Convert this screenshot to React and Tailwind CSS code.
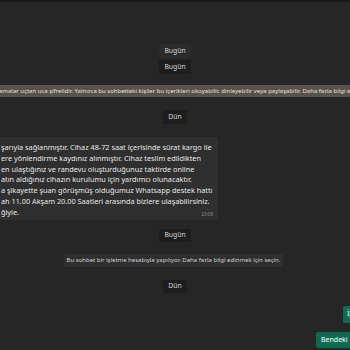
const font = { fontFamily: '"Noto Sans", "Open Sans", sans-serif' };

const lines = [
  'şarıyla sağlanmıştır. Cihaz 48-72 saat içerisinde sürat kargo ile',
  'ere yönlendirme kaydınız alınmıştır. Cihaz teslim edildikten',
  'en ulaştığınız ve randevu oluşturduğunuz taktirde online',
  'atın aldığınız cihazın kurulumu için yardımcı olunacaktır.',
  'a şikayette şuan görüşmüş olduğumuz Whatsapp destek hattı',
  'ah 11.00 Akşam 20.00 Saatleri arasında bizlere ulaşabilirsiniz.',
  'ğiyle.',
];

const Chip = ({ children, className = '' }) => (
  <div className="flex justify-center">
    <div className={`px-[5px] rounded-[2px] text-[6.8px] text-[#d4d4d4] flex items-center ${className}`}>
      {children}
    </div>
  </div>
);

export default function App() {
  return (
    <div className="w-[350px] h-[350px] overflow-hidden bg-[#262626] flex flex-col" style={font}>
      <div className="h-[2px] bg-[#1c1c1c]" />

      <Chip className="mt-[42px] h-[14px] bg-[#2b2b2b]">Bugün</Chip>
      <Chip className="mt-[2px] h-[14px] bg-[#1d1d1d]">Bugün</Chip>

      <div className="mt-[11px] h-[12px] bg-[#57534b] flex items-center overflow-hidden">
        <span className="whitespace-nowrap text-[6px] text-[#e2e0da] -ml-[1px]">
          amalar uçtan uca şifrelidir. Yalnızca bu sohbetteki kişiler bu içerikleri okuyabilir, dinleyebilir veya paylaşabilir. Daha fazla bilgi edinmek için seçin.
        </span>
      </div>

      <Chip className="mt-[13px] h-[14px] bg-[#1d1d1d]">Dün</Chip>

      <div className="mt-[13px] w-[218px] h-[83px] bg-[#2f2f2f] rounded-r-[3px] relative pt-[5px] overflow-hidden">
        {lines.map((l, i) => (
          <div key={i} className="whitespace-nowrap text-[7.3px] leading-[10.8px] text-[#e6e6e6] pl-[1px]">
            {l}
          </div>
        ))}
        <span className="absolute right-[5px] bottom-[2px] text-[4.5px] text-[#8c8c8c]">23:08</span>
      </div>

      <Chip className="mt-[9px] h-[13px] bg-[#1d1d1d]">Bugün</Chip>

      <div className="mt-[12px] ml-[64px] w-[219px] h-[13px] bg-[#2f2f2f] rounded-[2px] flex items-center justify-center">
        <span className="whitespace-nowrap text-[6px] text-[#cfcfcf]">
          Bu sohbet bir işletme hesabıyla yapılıyor. Daha fazla bilgi edinmek için seçin.
        </span>
      </div>

      <Chip className="mt-[13px] h-[13px] bg-[#1d1d1d]">Dün</Chip>

      <div className="mt-[13px] flex justify-end">
        <div className="h-[17px] w-[40px] -mr-[33px] bg-[#0e6b51] rounded-[2px] text-[7px] text-white flex items-center pl-[4px] shrink-0">
          İptal
        </div>
      </div>
      <div className="mt-[9px] flex justify-end">
        <div className="h-[16px] w-[50px] -mr-[16px] bg-[#0e6b51] rounded-[2px] text-[7px] text-white flex items-center pl-[5px] shrink-0">
          Bendeki
        </div>
      </div>
    </div>
  );
}
